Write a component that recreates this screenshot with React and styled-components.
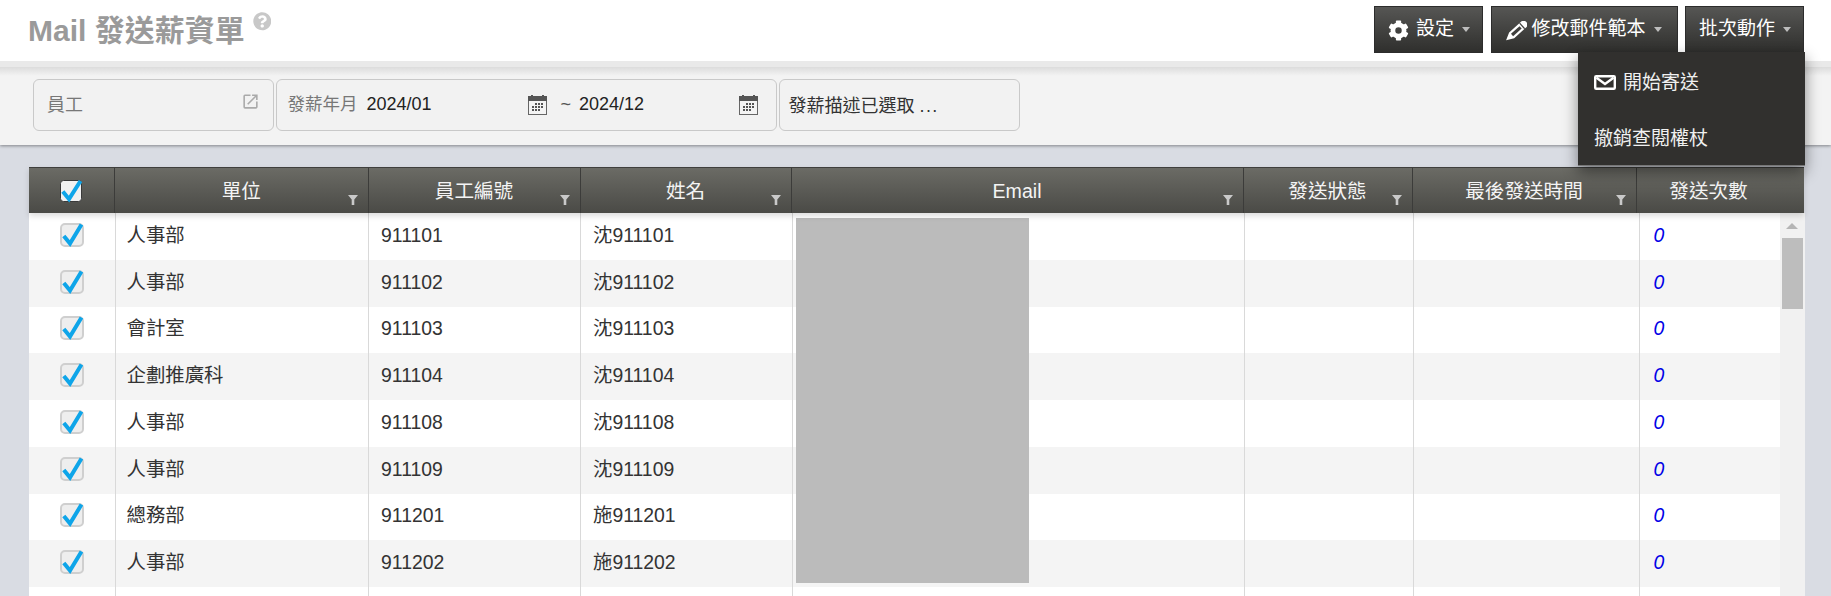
import React from 'react';
import styled, { createGlobalStyle } from 'styled-components';
import { FaQuestionCircle } from 'react-icons/fa';
import { MdOpenInNew } from 'react-icons/md';

const Global = createGlobalStyle`
  html, body { margin: 0; padding: 0; height: 100%; overflow: hidden; background: #d9dce3; }
  * { box-sizing: border-box; }
  body { font-family: "Liberation Sans", "Noto Sans CJK TC", sans-serif; color: #333; }
`;

const Page = styled.div`
  height: 596px;
  display: flex;
  flex-direction: column;
  overflow: hidden;
`;

const TopBar = styled.header`
  height: 67px;
  flex: none;
  background: #fff;
  border-bottom: 6px solid #e9e9e9;
  display: flex;
  justify-content: space-between;
  padding: 0 27px 0 28px;
  position: relative;
  z-index: 3;
`;

const TitleWrap = styled.div`
  display: flex;
  align-items: flex-start;
`;

const Title = styled.h1`
  margin: 14px 0 0;
  font-size: 30px;
  line-height: 34px;
  font-weight: 700;
  color: #9a9a9a;
  white-space: nowrap;
`;

const Help = styled(FaQuestionCircle)`
  margin: 12px 0 0 8px;
  width: 18.5px;
  height: 18.5px;
  color: #c8c8c8;
`;

const Actions = styled.div`
  display: flex;
  gap: 7.5px;
  padding-top: 6px;
  align-items: flex-start;
`;

const ActionWrap = styled.div`
  position: relative;
`;

const ActionButton = styled.button`
  height: 47px;
  width: ${p => p.$w}px;
  padding: 0 0 0 ${p => p.$pad}px;
  display: flex;
  align-items: center;
  border: 1px solid #2c2c2c;
  background: linear-gradient(#565654, #2f2f2d);
  color: #fff;
  font: inherit;
  font-size: 19px;
  white-space: nowrap;
`;

const ButtonLabel = styled.span`
  line-height: 24px;
  margin-top: -1px;
`;

const IconSvg = styled.svg`
  width: ${p => p.$w}px;
  height: ${p => p.$h}px;
  margin: ${p => p.$top}px ${p => p.$gap}px 0 0;
  flex: none;
`;

const Gear = () => (
  <IconSvg $w={21} $h={21} $gap={7} $top={1} viewBox="0 0 24 24">
    <circle cx="12" cy="12" r="6.4" fill="none" stroke="#fff" strokeWidth="5.4" />
    {[0, 60, 120, 180, 240, 300].map(a => (
      <rect key={a} x="9" y="0.6" width="6" height="5" rx="1" fill="#fff" transform={`rotate(${a} 12 12)`} />
    ))}
  </IconSvg>
);

const Pencil = () => (
  <IconSvg $w={22} $h={21} $gap={5} $top={3} viewBox="0 0 22 21">
    <g transform="translate(11.5 10) rotate(-42)">
      <path d="M-6.5 -3.8 H9.5 a3.8 3.8 0 0 1 0 7.6 H-6.5 L-14 0 Z" fill="#fff" />
      <rect x="-6" y="-1.6" width="11.5" height="3.2" fill="#3f3f3d" />
      <rect x="7" y="-3.8" width="1.2" height="7.6" fill="#3f3f3d" />
    </g>
  </IconSvg>
);

const Caret = styled.span`
  width: 0;
  height: 0;
  margin-left: 8px;
  border-left: 4px solid transparent;
  border-right: 4px solid transparent;
  border-top: 5px solid #bdbdbd;
`;

const Menu = styled.div`
  position: absolute;
  top: 46px;
  right: -1px;
  width: 227px;
  height: 114px;
  background: #31302e;
  box-shadow: 0 6px 14px rgba(0, 0, 0, 0.45);
  border-bottom: 1px solid #777;
  display: flex;
  flex-direction: column;
  color: #f0f0f0;
  font-size: 19px;
  z-index: 5;
`;

const MenuItem = styled.div`
  height: 56px;
  padding: 0 0 0 16px;
  display: flex;
  align-items: center;
  white-space: nowrap;
`;

const MailSvg = styled.svg`
  width: 22px;
  height: 15px;
  margin: 5px 7px 0 0;
  flex: none;
`;

const MailIcon = () => (
  <MailSvg viewBox="0 0 22 15">
    <rect x="1.2" y="1.2" width="19.6" height="12.6" rx="1" fill="none" stroke="#fff" strokeWidth="2.4" />
    <path d="M2.5 2.8 L11 9 L19.5 2.8" fill="none" stroke="#fff" strokeWidth="2.4" />
  </MailSvg>
);

const FilterBar = styled.section`
  height: 78px;
  flex: none;
  background: linear-gradient(#dcdcdc, #f3f3f3 9px);
  box-shadow: 0 1px 3px rgba(0, 0, 0, 0.4);
  padding: 12px 0 0 33px;
  display: flex;
  gap: 1.5px;
  position: relative;
  z-index: 2;
`;

const FilterBox = styled.div`
  height: 52px;
  width: ${p => p.$w}px;
  background: #f2f2f2;
  border: 1px solid #c9c9c9;
  border-radius: 6px;
  display: flex;
  align-items: center;
  padding-left: ${p => p.$pad}px;
  font-size: 18px;
  line-height: 24px;
  white-space: nowrap;
`;

const PickerText = styled.span`
  flex: 1;
  color: ${p => p.$dim ? '#777' : '#333'};
  margin-top: ${p => p.$dim ? -1 : 1}px;
`;

const Dots = styled.span`
  letter-spacing: 1.4px;
`;

const OpenIcon = styled(MdOpenInNew)`
  width: 19px;
  height: 19px;
  color: #aaa;
  margin: -7px 13px 0 0;
  flex: none;
`;

const DateLabel = styled.span`
  width: 79px;
  flex: none;
  font-size: 17.5px;
  color: #777;
  margin-top: -3px;
`;

const DateValue = styled.span`
  width: ${p => p.$w}px;
  flex: none;
  color: #222;
  margin-top: -3px;
`;

const Tilde = styled.span`
  margin: -3px 8px 0 14px;
  color: #555;
`;

const CalendarSvg = styled.svg`
  width: 19px;
  height: 20px;
  flex: none;
  margin-top: -1px;
`;

const Calendar = () => (
  <CalendarSvg viewBox="0 0 19 20">
    <rect x="0.5" y="1.5" width="18" height="18" fill="#f4f4f4" stroke="#666" />
    <rect x="0" y="1" width="19" height="5" fill="#555" />
    <rect x="3" y="0" width="2" height="2" fill="#555" />
    <rect x="14" y="0" width="2" height="2" fill="#555" />
    {[[8, [7, 10, 13]], [11, [4, 7, 10, 13]], [14, [4, 7, 10]]].map(([y, xs]) => xs.map(x => (
      <rect key={`${x}-${y}`} x={x} y={y} width="2" height="2" fill="#555" />
    )))}
  </CalendarSvg>
);

const Main = styled.main`
  flex: 1;
  min-height: 0;
  padding: 22px 0 0 28.5px;
  position: relative;
  background-color: #d9dce3;
`;

const HeaderRow = styled.div`
  width: 1775px;
  height: 46px;
  display: grid;
  grid-template-columns: 85.5px 253.5px 212px 211px 452px 169px 224px 168px;
  background: linear-gradient(#6b6b65, #4a4a46);
  border-top: 1px solid #3f3f3d;
  box-shadow: 0 3px 6px rgba(0, 0, 0, 0.14);
  position: relative;
  z-index: 1;
`;

const HeaderCell = styled.div`
  position: relative;
  display: flex;
  align-items: center;
  justify-content: center;
  padding: 0 ${p => p.$inset ? 23 : 0}px ${p => p.$first ? 2 : 0}px 0;
  color: #f4f4f4;
  font-size: 19.6px;
  line-height: 24px;
  border-left: ${p => p.$first ? 'none' : '1px solid #3c3c3a'};
`;

const FunnelSvg = styled.svg`
  position: absolute;
  right: 10px;
  bottom: 8px;
  width: 10px;
  height: 10px;
`;

const Funnel = () => (
  <FunnelSvg viewBox="0 0 10 10">
    <path d="M0 0h10L6.3 4.5V10H3.7V4.5z" fill="#c9c9c9" />
  </FunnelSvg>
);

const Body = styled.div`
  width: 1776px;
  height: 400px;
  display: flex;
  background: #fff;
  position: relative;
`;

const Rows = styled.div`
  width: 1751px;
  flex: none;
`;

const Row = styled.div`
  height: 46.75px;
  display: grid;
  grid-template-columns: 86px 253.5px 212px 212px 451.5px 169.5px 225.5px 141.5px;
  background: ${p => p.$even ? '#f4f4f4' : '#fff'};
`;

const Cell = styled.div`
  display: flex;
  align-items: center;
  padding: 0 0 3px ${p => p.$pad ?? 12}px;
  border-left: 1px solid #d9d9d9;
  font-size: 19.4px;
  line-height: 24px;
  color: #333;
  white-space: nowrap;
`;

const Count = styled.span`
  font-style: italic;
  color: #0000e6;
`;

const CheckCell = styled.div`
  display: flex;
  align-items: center;
  justify-content: center;
  padding-bottom: 3px;
`;

const CheckSvg = styled.svg`
  width: ${p => p.$size}px;
  height: ${p => p.$size}px;
  overflow: visible;
  margin-top: ${p => p.$head ? 3 : 0}px;
`;

const Check = ({ head }) => (
  head ? (
    <CheckSvg $head $size={22} viewBox="0 0 22 22">
      <rect x="0.5" y="0.5" width="21" height="21" rx="3" fill="#f1f1f1" stroke="#3a3a3a" />
      <path d="M2.8 11.5 L9 19 L20.5 1" fill="none" stroke="#0ea5e9" strokeWidth="4" />
    </CheckSvg>
  ) : (
    <CheckSvg $size={24} viewBox="0 0 24 24">
      <rect x="1" y="1" width="22" height="22" rx="4" fill="#eeeeee" stroke="#cfcfcf" strokeWidth="2" />
      <path d="M3.8 13 L10 20.5 L21.5 1.5" fill="none" stroke="#0ea5e9" strokeWidth="4" />
    </CheckSvg>
  )
);

const Scrollbar = styled.div`
  width: 25px;
  flex: none;
  background: #f1f1f1;
  padding-left: 2px;
  display: flex;
  flex-direction: column;
`;

const ScrollUp = styled.div`
  align-self: center;
  margin: 10px 0 9px -2px;
  width: 0;
  height: 0;
  border-left: 6px solid transparent;
  border-right: 6px solid transparent;
  border-bottom: 6px solid #b5b5b5;
`;

const Thumb = styled.div`
  width: 21px;
  height: 71px;
  background: #bdbdbd;
`;

const Redaction = styled.div`
  position: absolute;
  left: 767.5px;
  top: 5px;
  width: 233px;
  height: 365px;
  background: #bbbbbb;
`;

const columns = [
  { label: '單位', filter: true },
  { label: '員工編號', filter: true },
  { label: '姓名', filter: true },
  { label: 'Email', filter: true },
  { label: '發送狀態', filter: true },
  { label: '最後發送時間', filter: true },
  { label: '發送次數', filter: false },
];

const rows = [
  ['人事部', '911101', '沈'],
  ['人事部', '911102', '沈'],
  ['會計室', '911103', '沈'],
  ['企劃推廣科', '911104', '沈'],
  ['人事部', '911108', '沈'],
  ['人事部', '911109', '沈'],
  ['總務部', '911201', '施'],
  ['人事部', '911202', '施'],
];

export default function App() {
  return (
    <Page>
      <Global />
      <TopBar>
        <TitleWrap>
          <Title>Mail 發送薪資單</Title>
          <Help />
        </TitleWrap>
        <Actions>
          <ActionButton $w={109} $pad={13}><Gear /><ButtonLabel>設定</ButtonLabel><Caret /></ActionButton>
          <ActionButton $w={187} $pad={13}><Pencil /><ButtonLabel>修改郵件範本</ButtonLabel><Caret /></ActionButton>
          <ActionWrap>
            <ActionButton $w={119} $pad={13}><ButtonLabel>批次動作</ButtonLabel><Caret /></ActionButton>
            <Menu>
              <MenuItem><MailIcon />開始寄送</MenuItem>
              <MenuItem>撤銷查閱權杖</MenuItem>
            </Menu>
          </ActionWrap>
        </Actions>
      </TopBar>
      <FilterBar>
        <FilterBox $w={241} $pad={13}>
          <PickerText $dim>員工</PickerText>
          <OpenIcon />
        </FilterBox>
        <FilterBox $w={501.5} $pad={11}>
          <DateLabel>發薪年月</DateLabel>
          <DateValue $w={161}>2024/01</DateValue>
          <Calendar />
          <Tilde>~</Tilde>
          <DateValue $w={160}>2024/12</DateValue>
          <Calendar />
        </FilterBox>
        <FilterBox $w={241} $pad={9}>
          <PickerText>發薪描述已選取 <Dots>...</Dots></PickerText>
        </FilterBox>
      </FilterBar>
      <Main>
        <HeaderRow>
          <HeaderCell $first><Check head /></HeaderCell>
          {columns.map(c => (
            <HeaderCell key={c.label} $inset={!c.filter}>
              {c.label}
              {c.filter && <Funnel />}
            </HeaderCell>
          ))}
        </HeaderRow>
        <Body>
          <Rows>
            {[...rows, null].map((r, i) => (
              <Row key={i} $even={i % 2 === 1}>
                <CheckCell>{r && <Check />}</CheckCell>
                <Cell $pad={11}>{r?.[0]}</Cell>
                <Cell>{r?.[1]}</Cell>
                <Cell>{r?.[2]}{r?.[1]}</Cell>
                <Cell />
                <Cell />
                <Cell />
                <Cell $pad={14}>{r && <Count>0</Count>}</Cell>
              </Row>
            ))}
          </Rows>
          <Scrollbar>
            <ScrollUp />
            <Thumb />
          </Scrollbar>
          <Redaction />
        </Body>
      </Main>
    </Page>
  );
}
